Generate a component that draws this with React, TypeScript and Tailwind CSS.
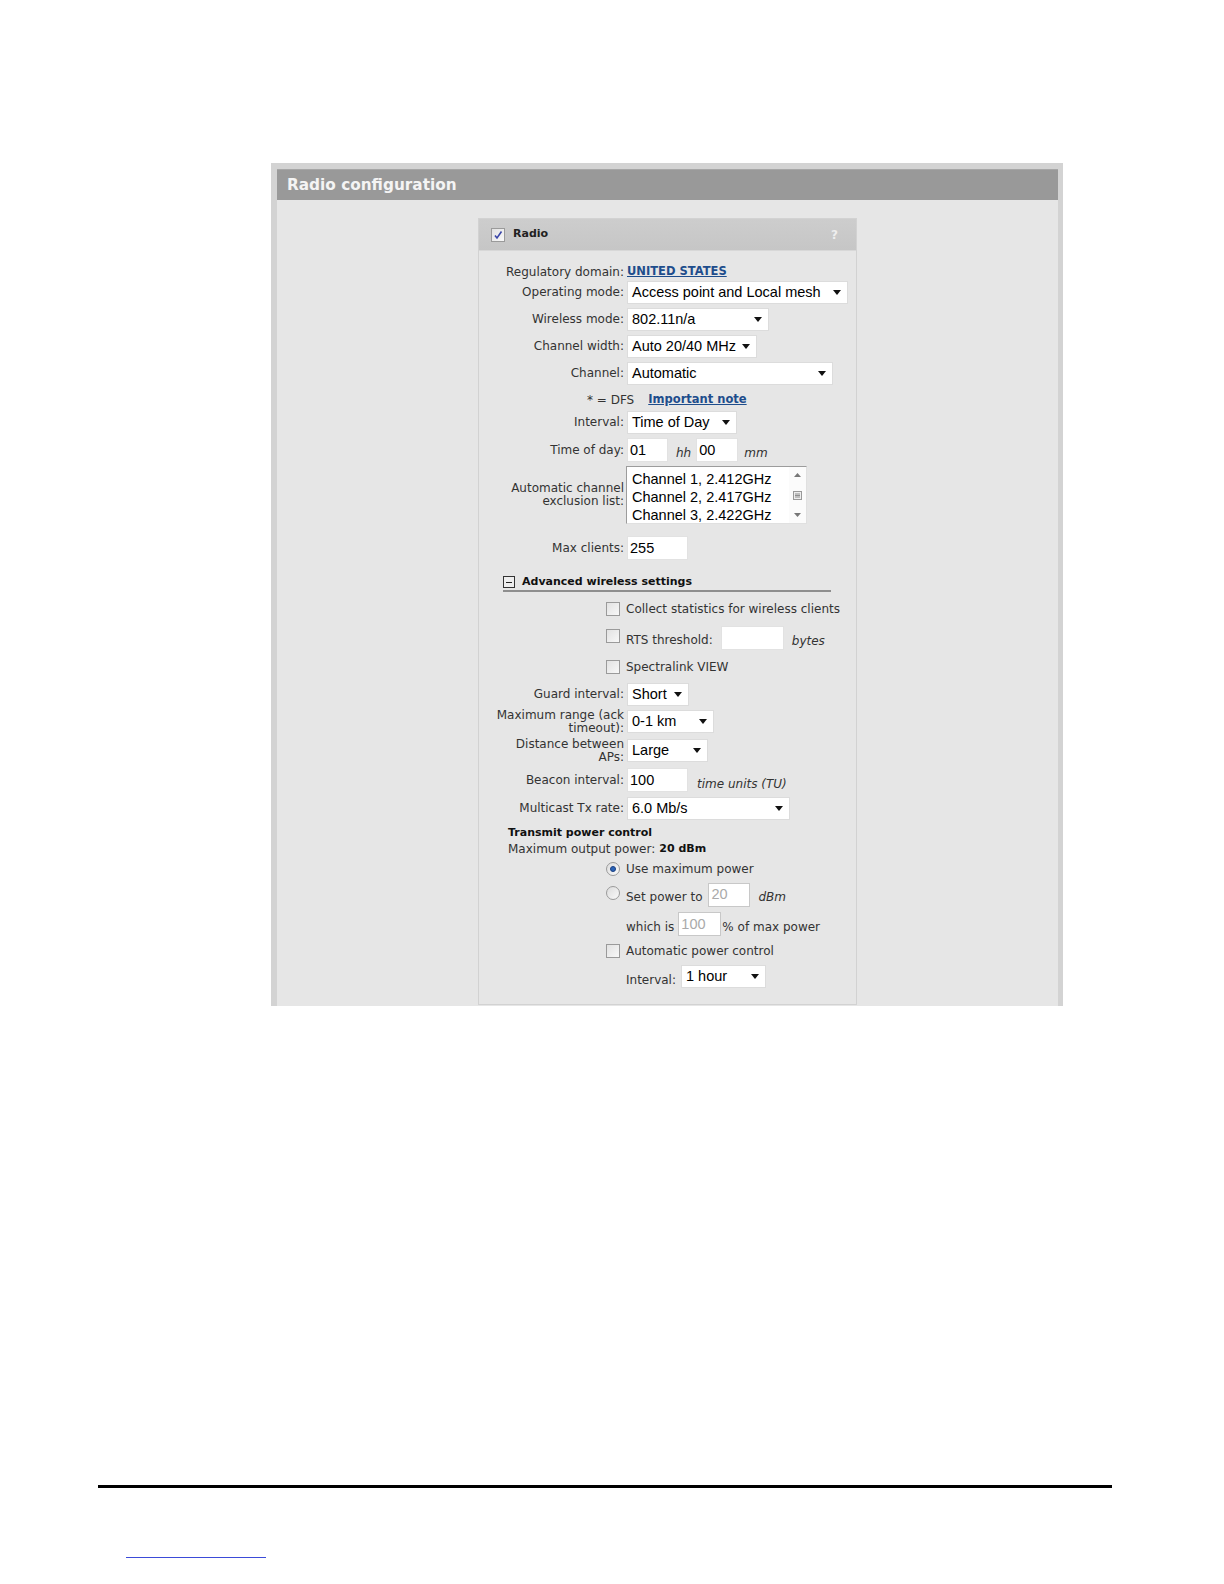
import React from "react";

const LBL = "font-['DejaVu_Sans',sans-serif] text-[12px] text-[#333]";
const BLD = "font-['DejaVu_Sans',sans-serif] font-bold text-[11px] text-[#111]";
const VAL = "font-['Liberation_Sans',Arial,sans-serif] text-[14.5px] text-black";

function Arrow() {
  return (
    <svg width="8" height="5" viewBox="0 0 8 5" className="shrink-0">
      <path d="M0 0 L8 0 L4 5 Z" fill="#111" />
    </svg>
  );
}

function Select({ w, value }: { w: string; value: string }) {
  return (
    <div className={`${w} h-[23px] bg-white border border-[#dcdcdc] flex items-center justify-between pl-[4px] pr-[6px]`}>
      <span className={`${VAL} whitespace-nowrap leading-none`}>{value}</span>
      <Arrow />
    </div>
  );
}

function Input({ w, value, disabled }: { w: string; value: string; disabled?: boolean }) {
  return (
    <div
      className={`${w} h-[24px] bg-white border ${disabled ? "border-[#c8c8c8]" : "border-[#e2e2e2]"} flex items-center pl-[2px]`}
    >
      <span className={`font-['Liberation_Sans',Arial,sans-serif] text-[14.5px] leading-none ${disabled ? "text-[#aaa]" : "text-black"}`}>{value}</span>
    </div>
  );
}

function Check({ checked }: { checked?: boolean }) {
  return (
    <div className="w-[14px] h-[14px] border border-[#9a9a9a] bg-gradient-to-br from-[#e2e2e2] to-[#f8f8f8] flex items-center justify-center shrink-0">
      {checked && (
        <svg width="10" height="10" viewBox="0 0 10 10">
          <path d="M2 5.5 L4 8 L8.5 1.5" stroke="#3b46a8" strokeWidth="1.6" fill="none" />
        </svg>
      )}
    </div>
  );
}

function Radio({ checked }: { checked?: boolean }) {
  return (
    <div className="w-[14px] h-[14px] rounded-full border border-[#9a9a9a] bg-gradient-to-br from-[#dcdcdc] to-[#fafafa] flex items-center justify-center shrink-0">
      {checked && <div className="w-[6px] h-[6px] rounded-full bg-[#2a64b8] border border-[#1b3f80]" />}
    </div>
  );
}

function Label({ children }: { children: React.ReactNode }) {
  return <div className={`w-[146px] shrink-0 text-right ${LBL} leading-[13px] pr-[1px] whitespace-nowrap`}>{children}</div>;
}

export default function App() {
  return (
    <div className="w-[1224px] h-[1584px] bg-white relative overflow-hidden">
      <div className="pt-[163px] pl-[271px]">
        <div className="w-[792px] h-[843px] bg-[#d3d3d3] pt-[6px] pl-[6px] pr-[5px] flex flex-col">
          <div className="h-[31px] bg-[#999999] border-t border-[#a6a6a6] flex items-center pl-[10px]">
            <span className="font-['DejaVu_Sans',sans-serif] font-bold text-[15.3px] text-[#f4f4f4]">Radio configuration</span>
          </div>
          <div className="flex-1 bg-[#e6e6e6] pt-[18px] pl-[201px]">
            <div className="w-[379px] h-[787px] border border-[#d2d2d2] bg-[#e6e6e6] flex flex-col">
              {/* panel header */}
              <div className="h-[32px] bg-gradient-to-b from-[#cdcdcd] to-[#c6c6c6] border-b border-[#d8d8d8] flex items-center pl-[12px] pr-[18px]">
                <Check checked />
                <span className={`${BLD} text-[#222] ml-[8px]`}>Radio</span>
                <span className="ml-auto font-['DejaVu_Sans',sans-serif] font-bold text-[12px] text-[#eeeeee]">?</span>
              </div>

              {/* rows */}
              <div className="mt-[12px] h-[18px] flex items-center">
                <Label>Regulatory domain:</Label>
                <span className="ml-[2px] font-['DejaVu_Sans',sans-serif] font-bold text-[11.5px] text-[#1e4d8c] underline">UNITED STATES</span>
              </div>
              <div className="h-[23px] flex items-center">
                <Label>Operating mode:</Label>
                <div className="ml-[2px]"><Select w="w-[221px]" value="Access point and Local mesh" /></div>
              </div>
              <div className="mt-[4px] h-[23px] flex items-center">
                <Label>Wireless mode:</Label>
                <div className="ml-[2px]"><Select w="w-[142px]" value="802.11n/a" /></div>
              </div>
              <div className="mt-[4px] h-[23px] flex items-center">
                <Label>Channel width:</Label>
                <div className="ml-[2px]"><Select w="w-[130px]" value="Auto 20/40 MHz" /></div>
              </div>
              <div className="mt-[4px] h-[23px] flex items-center">
                <Label>Channel:</Label>
                <div className="ml-[2px]"><Select w="w-[206px]" value="Automatic" /></div>
              </div>
              <div className="mt-[7px] h-[16px] flex items-center pl-[108px]">
                <span className={LBL}>* = DFS</span>
                <span className="ml-[14px] font-['DejaVu_Sans',sans-serif] font-bold text-[11.5px] text-[#1e4d8c] underline">Important note</span>
              </div>
              <div className="mt-[3px] h-[23px] flex items-center">
                <Label>Interval:</Label>
                <div className="ml-[2px]"><Select w="w-[110px]" value="Time of Day" /></div>
              </div>
              <div className="mt-[4px] h-[24px] flex items-center">
                <Label>Time of day:</Label>
                <div className="ml-[2px] flex items-center">
                  <Input w="w-[41px]" value="01" />
                  <span className={`${LBL} italic ml-[8px] mt-[6px]`}>hh</span>
                  <div className="ml-[5px]"><Input w="w-[42px]" value="00" /></div>
                  <span className={`${LBL} italic ml-[6px] mt-[6px]`}>mm</span>
                </div>
              </div>
              <div className="mt-[4px] h-[58px] flex items-center">
                <Label>Automatic channel<br />exclusion list:</Label>
                <div className="ml-[1px] w-[181px] h-[58px] bg-white border-t border-l border-[#9c9c9c] border-r border-b border-r-[#e0e0e0] border-b-[#e0e0e0] flex">
                  <div className={`flex-1 pl-[5px] pt-[3px] ${VAL} leading-[18px] whitespace-nowrap`}>
                    <div>Channel 1, 2.412GHz</div>
                    <div>Channel 2, 2.417GHz</div>
                    <div>Channel 3, 2.422GHz</div>
                  </div>
                  <div className="w-[17px] flex flex-col items-center justify-between py-[6px] bg-[#fbfbfb]">
                    <svg width="7" height="4" viewBox="0 0 7 4"><path d="M0 4 L7 4 L3.5 0 Z" fill="#777" /></svg>
                    <svg width="11" height="9" viewBox="0 0 11 9">
                      <rect x="1.5" y="0.5" width="8" height="8" fill="#eee" stroke="#999" />
                      <path d="M3 3 H8 M3 4.5 H8 M3 6 H8" stroke="#777" strokeWidth="0.8" />
                    </svg>
                    <svg width="7" height="4" viewBox="0 0 7 4"><path d="M0 0 L7 0 L3.5 4 Z" fill="#777" /></svg>
                  </div>
                </div>
              </div>
              <div className="mt-[12px] h-[24px] flex items-center">
                <Label>Max clients:</Label>
                <div className="ml-[2px]"><Input w="w-[61px]" value="255" /></div>
              </div>

              {/* advanced */}
              <div className="mt-[15px] ml-[24px] w-[328px] h-[17px] border-b-2 border-[#8e8e8e] flex items-start">
                <div className="w-[12px] h-[12px] border border-[#333] bg-[#eee] flex items-center justify-center mt-[1px]">
                  <div className="w-[6px] h-[1px] bg-[#222]" />
                </div>
                <span className={`ml-[7px] ${BLD} leading-[14px]`}>Advanced wireless settings</span>
              </div>
              <div className="mt-[9px] h-[16px] flex items-center pl-[127px]">
                <Check />
                <span className={`${LBL} ml-[6px] whitespace-nowrap`}>Collect statistics for wireless clients</span>
              </div>
              <div className="mt-[9px] h-[24px] flex items-center pl-[127px]">
                <div className="-mt-[5px]"><Check /></div>
                <span className={`${LBL} ml-[6px] mt-[4px]`}>RTS threshold:</span>
                <div className="ml-[8px]"><Input w="w-[63px]" value="" /></div>
                <span className={`${LBL} italic ml-[8px] mt-[6px]`}>bytes</span>
              </div>
              <div className="mt-[9px] h-[16px] flex items-center pl-[127px]">
                <Check />
                <span className={`${LBL} ml-[6px]`}>Spectralink VIEW</span>
              </div>
              <div className="mt-[8px] h-[23px] flex items-center">
                <Label>Guard interval:</Label>
                <div className="ml-[2px]"><Select w="w-[62px]" value="Short" /></div>
              </div>
              <div className="mt-[4px] h-[23px] flex items-center">
                <Label>Maximum range (ack<br />timeout):</Label>
                <div className="ml-[2px]"><Select w="w-[87px]" value="0-1 km" /></div>
              </div>
              <div className="mt-[6px] h-[23px] flex items-center">
                <Label>Distance between<br />APs:</Label>
                <div className="ml-[2px]"><Select w="w-[81px]" value="Large" /></div>
              </div>
              <div className="mt-[6px] h-[24px] flex items-center">
                <Label>Beacon interval:</Label>
                <div className="ml-[2px]"><Input w="w-[61px]" value="100" /></div>
                <span className={`${LBL} italic ml-[9px] mt-[7px] whitespace-nowrap`}>time units (TU)</span>
              </div>
              <div className="mt-[5px] h-[23px] flex items-center">
                <Label>Multicast Tx rate:</Label>
                <div className="ml-[2px]"><Select w="w-[163px]" value="6.0 Mb/s" /></div>
              </div>

              {/* transmit power */}
              <div className="mt-[6px] h-[14px] flex items-center pl-[29px]">
                <span className={BLD}>Transmit power control</span>
              </div>
              <div className="mt-[2px] h-[14px] flex items-center pl-[29px]">
                <span className={`${LBL} whitespace-nowrap`}>Maximum output power:</span>
                <span className={`ml-[4px] ${BLD}`}>20 dBm</span>
              </div>
              <div className="mt-[5px] h-[16px] flex items-center pl-[127px]">
                <Radio checked />
                <span className={`${LBL} ml-[6px]`}>Use maximum power</span>
              </div>
              <div className="mt-[5px] h-[25px] flex items-center pl-[127px]">
                <div className="-mt-[3px]"><Radio /></div>
                <span className={`${LBL} ml-[6px] mt-[4px] whitespace-nowrap`}>Set power to</span>
                <div className="ml-[6px]"><Input w="w-[42px]" value="20" disabled /></div>
                <span className={`${LBL} italic ml-[8px] mt-[4px]`}>dBm</span>
              </div>
              <div className="mt-[5px] h-[24px] flex items-center pl-[147px]">
                <span className={`${LBL} mt-[6px] whitespace-nowrap`}>which is</span>
                <div className="ml-[4px]"><Input w="w-[43px]" value="100" disabled /></div>
                <span className={`${LBL} ml-[1px] mt-[6px] whitespace-nowrap`}>% of max power</span>
              </div>
              <div className="mt-[7px] h-[16px] flex items-center pl-[127px]">
                <Check />
                <span className={`${LBL} ml-[6px] whitespace-nowrap`}>Automatic power control</span>
              </div>
              <div className="mt-[6px] h-[23px] flex items-center pl-[147px]">
                <span className={`${LBL} mt-[7px]`}>Interval:</span>
                <div className="ml-[5px]"><Select w="w-[85px]" value="1 hour" /></div>
              </div>
            </div>
          </div>
        </div>
      </div>

      <div className="mt-[479px] ml-[98px] w-[1014px] h-[3px] bg-black" />
      <div className="mt-[69px] ml-[126px] w-[140px] h-[1px] bg-[#3b4bd8]" />
    </div>
  );
}
